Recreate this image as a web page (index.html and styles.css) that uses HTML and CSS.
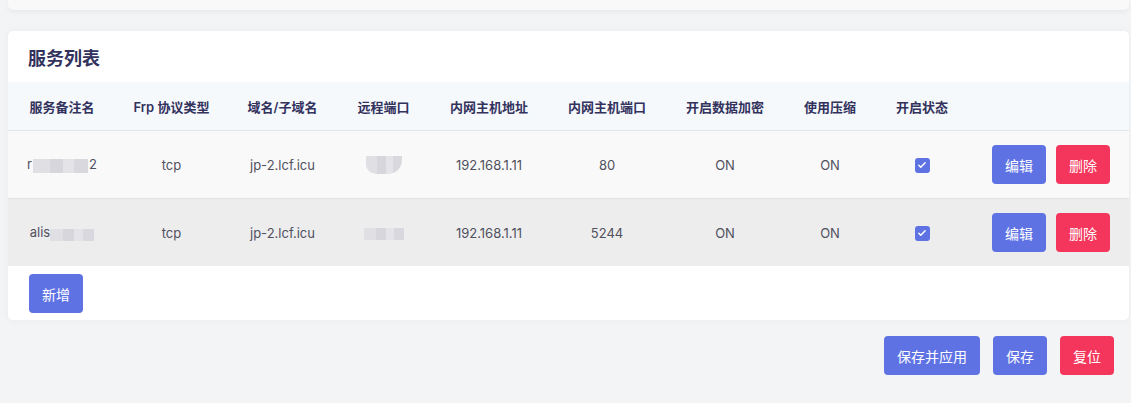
FILE: index.html
```html
<!DOCTYPE html>
<html lang="zh-CN">
<head>
  <meta charset="utf-8"/>
  <title>Frp 服务列表</title>
  <link rel="stylesheet" href="styles.css">
</head>
<body>
  <div class="page">
    <!-- bottom edge of the previous section -->
    <div class="stub"></div>

    <div class="card">
      <h3 class="card-title">服务列表</h3>
      <table class="list">
        <colgroup>
          <col style="width:108px"><col style="width:111px"><col style="width:111px">
          <col style="width:91px"><col style="width:120px"><col style="width:116px">
          <col style="width:120px"><col style="width:90px"><col style="width:94px"><col>
        </colgroup>
        <thead>
          <tr>
            <th>服务备注名</th>
            <th>Frp 协议类型</th>
            <th>域名/子域名</th>
            <th>远程端口</th>
            <th>内网主机地址</th>
            <th>内网主机端口</th>
            <th>开启数据加密</th>
            <th>使用压缩</th>
            <th>开启状态</th>
            <th></th>
          </tr>
        </thead>
        <tbody>
          <tr class="odd">
            <td>r<span class="mask mask-a"></span>2</td>
            <td>tcp</td>
            <td>jp-2.lcf.icu</td>
            <td><span class="mask mask-c"></span></td>
            <td>192.168.1.11</td>
            <td>80</td>
            <td>ON</td>
            <td>ON</td>
            <td><span class="check"><svg viewBox="0 0 16 16" width="10" height="10"><path d="M3 8.5l3 3 7-7" fill="none" stroke="#fff" stroke-width="2.4" stroke-linecap="round" stroke-linejoin="round"/></svg></span></td>
            <td class="actions"><div class="btns"><button class="btn">编辑</button><button class="btn btn-danger">删除</button></div></td>
          </tr>
          <tr class="even">
            <td>alis<span class="mask mask-b"></span></td>
            <td>tcp</td>
            <td>jp-2.lcf.icu</td>
            <td><span class="mask mask-d"></span></td>
            <td>192.168.1.11</td>
            <td>5244</td>
            <td>ON</td>
            <td>ON</td>
            <td><span class="check"><svg viewBox="0 0 16 16" width="10" height="10"><path d="M3 8.5l3 3 7-7" fill="none" stroke="#fff" stroke-width="2.4" stroke-linecap="round" stroke-linejoin="round"/></svg></span></td>
            <td class="actions"><div class="btns"><button class="btn">编辑</button><button class="btn btn-danger">删除</button></div></td>
          </tr>
        </tbody>
      </table>
      <div class="card-foot">
        <button class="btn">新增</button>
      </div>
    </div>

    <div class="page-actions">
      <button class="btn">保存并应用</button>
      <button class="btn">保存</button>
      <button class="btn btn-danger">复位</button>
    </div>
  </div>
</body>
</html>
```

FILE: styles.css
```css
body {
  margin: 0;
  background: #f3f4f6;
  font-family: Inter, "Noto Sans CJK SC", sans-serif;
  color: #50505e;
}
.page {
  padding: 0 2px 0 8px;
}
.stub {
  height: 10px;
  background: #f9f9fa;
  border-radius: 0 0 5px 5px;
  box-shadow: 0 2px 4px rgba(0,0,0,0.05);
}
.card {
  margin-top: 21px;
  background: #fff;
  border-radius: 5px;
  box-shadow: 0 0 8px rgba(0,0,0,0.04);
  overflow: hidden;
}
.card-title {
  margin: 0;
  height: 51px;
  display: flex;
  align-items: center;
  padding: 0 20px;
  font-size: 18px;
  font-weight: 700;
  color: #32325d;
}

.list {
  width: 100%;
  border-collapse: collapse;
  table-layout: fixed;
}
.list th {
  height: 48px;
  padding: 0;
  background: #f6f9fc;
  border-bottom: 1px solid #e2e5ea;
  font-size: 13px;
  font-weight: 600;
  color: #32325d;
  text-align: center;
}
.list td {
  height: 67px;
  padding: 0;
  font-size: 13px;
  text-align: center;
  white-space: nowrap;
}
.list tr.odd td {
  background: #f9f9f9;
  border-bottom: 1px solid #e3e3e6;
}
.list tr.even td {
  background: #ededee;
}
.list td.actions {
  padding-right: 19px;
}
.btns {
  display: flex;
  justify-content: flex-end;
  gap: 10px;
}

.mask {
  display: inline-block;
  vertical-align: middle;
  height: 14px;
  background: linear-gradient(90deg, #e0e0e4 0 30%, #d6d6dc 30% 55%, #e4e4e8 55% 75%, #d8d8de 75%);
  filter: blur(0.6px);
}
.mask-a { width: 55px; margin: 0 1px; }
.mask-b { width: 44px; height: 12px; margin-top: 3px; }
.mask-c { width: 36px; height: 18px; border-radius: 0 0 14px 10px; }
.mask-d { width: 40px; height: 12px; }

.check {
  display: inline-flex;
  align-items: center;
  justify-content: center;
  width: 15px;
  height: 15px;
  border-radius: 3px;
  background: #5e72e4;
  vertical-align: middle;
}

.btn {
  height: 39px;
  padding: 0 13px;
  border: none;
  border-radius: 4px;
  background: #5e72e4;
  color: #fff;
  font-family: inherit;
  font-size: 14px;
  cursor: pointer;
}
.btn-danger {
  background: #f5365c;
}
.card-foot {
  padding: 8px 21px 7px;
}
.page-actions {
  margin-top: 16px;
  padding-right: 15px;
  display: flex;
  justify-content: flex-end;
  gap: 13px;
}
```
